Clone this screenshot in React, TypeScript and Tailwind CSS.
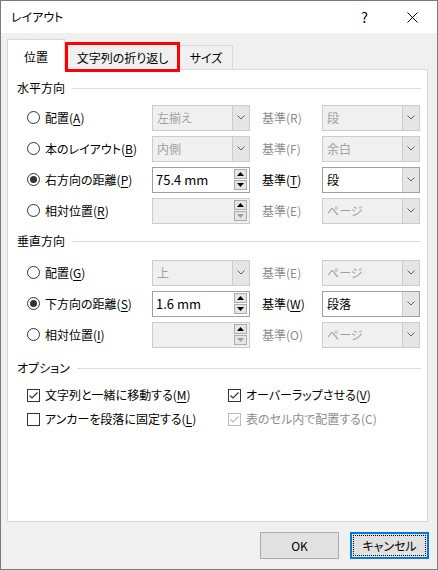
import React from 'react';

type Opt = { text: string; k?: string; disabled?: boolean };

// text with an access key in brackets, e.g. 配置(A)
function KeyLabel({ text, k, disabled }: Opt) {
  return (
    <span className={disabled ? 'text-[#8c8c8c]' : 'text-black'}>
      {text}(
      {disabled ? k : <span className="underline underline-offset-2">{k}</span>})
    </span>
  );
}

function Radio({ checked }: { checked?: boolean }) {
  return (
    <span className="flex h-[13px] w-[13px] shrink-0 items-center justify-center rounded-full border border-[#333333] bg-white">
      {checked && <span className="h-[7px] w-[7px] rounded-full bg-[#333333]" />}
    </span>
  );
}

function Check({ checked, disabled }: { checked?: boolean; disabled?: boolean }) {
  const c = disabled ? '#bcbcbc' : '#333333';
  return (
    <span
      className={`flex h-[13px] w-[13px] shrink-0 items-center justify-center border bg-white ${
        disabled ? 'border-[#bcbcbc]' : 'border-[#333333]'
      }`}
    >
      {checked && (
        <svg width="11" height="11" viewBox="0 0 11 11">
          <polyline points="1.5,5.5 4,8 9.5,2.5" fill="none" stroke={c} strokeWidth="1.2" />
        </svg>
      )}
    </span>
  );
}

function Chevron() {
  return (
    <svg width="8" height="5" viewBox="0 0 8 5">
      <polyline points="0.5,0.5 4,4 7.5,0.5" fill="none" stroke="#606060" strokeWidth="1" />
    </svg>
  );
}

function Combo({ value, disabled }: { value: string; disabled?: boolean }) {
  return (
    <div
      className={`flex h-[26px] w-[98px] shrink-0 items-stretch border ${
        disabled ? 'border-[#cccccc] bg-[#f0f0f0] text-[#a0a0a0]' : 'border-[#a0a0a0] bg-white text-black'
      }`}
    >
      <span className="flex flex-1 items-center pl-[4px]">{value}</span>
      <span className="flex w-[17px] items-center justify-center border-l border-[#cccccc] bg-[#e5e5e5]">
        <Chevron />
      </span>
    </div>
  );
}

function SpinBtn({ up, color }: { up?: boolean; color: string }) {
  return (
    <span className="flex h-[10px] w-[13px] items-center justify-center border border-[#adadad] bg-[#e5e5e5]">
      <svg width="7" height="4" viewBox="0 0 7 4">
        <polygon points={up ? '0,4 3.5,0 7,4' : '0,0 3.5,4 7,0'} fill={color} />
      </svg>
    </span>
  );
}

function Spin({ value, disabled }: { value?: string; disabled?: boolean }) {
  return (
    <div
      className={`flex h-[26px] w-[98px] shrink-0 items-center border pl-[3px] pr-[2px] ${
        disabled ? 'border-[#cccccc] bg-[#f0f0f0]' : 'border-[#a0a0a0] bg-white'
      }`}
    >
      <span className="flex-1 text-[13px] text-black">{value}</span>
      <div className="flex flex-col gap-[1px]">
        <SpinBtn up color="#000000" />
        <SpinBtn color={disabled ? '#a0a0a0' : '#000000'} />
      </div>
    </div>
  );
}

function SectionHead({ title }: { title: string }) {
  return (
    <div className="flex h-[20px] items-center pl-[9px]">
      <span className="text-black">{title}</span>
      <span className="ml-[7px] mr-[6px] flex-1 border-t border-[#dcdcdc]" />
    </div>
  );
}

type Row = {
  checked?: boolean;
  label: Opt;
  spin?: boolean;
  value?: string;
  enabled?: boolean;
  base: Opt;
  baseValue: string;
};

function PosRow({ r }: { r: Row }) {
  return (
    <div className="flex h-[31px] items-center pl-[19px]">
      <div className="flex w-[125px] items-center gap-[5px]">
        <Radio checked={r.checked} />
        <KeyLabel {...r.label} />
      </div>
      {r.spin ? <Spin value={r.value} disabled={!r.enabled} /> : <Combo value={r.value ?? ''} disabled={!r.enabled} />}
      <div className="w-[72px] pl-[12px]">
        <KeyLabel {...r.base} />
      </div>
      <Combo value={r.baseValue} disabled={!r.enabled} />
    </div>
  );
}

const horizontal: Row[] = [
  { label: { text: '配置', k: 'A' }, value: '左揃え', base: { text: '基準', k: 'R', disabled: true }, baseValue: '段' },
  { label: { text: '本のレイアウト', k: 'B' }, value: '内側', base: { text: '基準', k: 'F', disabled: true }, baseValue: '余白' },
  { checked: true, label: { text: '右方向の距離', k: 'P' }, spin: true, value: '75.4 mm', enabled: true, base: { text: '基準', k: 'T' }, baseValue: '段' },
  { label: { text: '相対位置', k: 'R' }, spin: true, base: { text: '基準', k: 'E', disabled: true }, baseValue: 'ページ' },
];

const vertical: Row[] = [
  { label: { text: '配置', k: 'G' }, value: '上', base: { text: '基準', k: 'E', disabled: true }, baseValue: 'ページ' },
  { checked: true, label: { text: '下方向の距離', k: 'S' }, spin: true, value: '1.6 mm', enabled: true, base: { text: '基準', k: 'W' }, baseValue: '段落' },
  { label: { text: '相対位置', k: 'I' }, spin: true, base: { text: '基準', k: 'O', disabled: true }, baseValue: 'ページ' },
];

function CheckItem({ checked, disabled, label, className }: { checked?: boolean; disabled?: boolean; label: Opt; className?: string }) {
  return (
    <div className={`flex items-center gap-[5px] ${className ?? ''}`}>
      <Check checked={checked} disabled={disabled} />
      <KeyLabel {...label} disabled={disabled} />
    </div>
  );
}

export default function App() {
  return (
    <div className="h-[570px] w-[438px] overflow-hidden border border-[#7a7a7a] bg-[#f0f0f0] font-['Noto_Sans_CJK_JP','Noto_Sans',sans-serif] text-[12px] leading-[16px] text-black [font-feature-settings:'palt']">
      {/* Title bar */}
      <div className="flex h-[32px] items-center bg-white pl-[10px]">
        <span className="flex-1 text-[12px]">レイアウト</span>
        <span className="mr-[39px] text-[14px]">?</span>
        <svg className="mr-[19px]" width="11" height="11" viewBox="0 0 11 11">
          <path d="M0.5 0.5 L10.5 10.5 M10.5 0.5 L0.5 10.5" stroke="#000" strokeWidth="1" />
        </svg>
      </div>

      {/* Tabs */}
      <div className="ml-[6px] mt-[6px] flex h-[30px] items-end">
        <div className="relative z-10 -mb-px flex h-[31px] w-[58px] justify-center border-x border-t border-[#d9d9d9] bg-white pt-[9px]">
          位置
        </div>
        <div className="relative z-20 -mb-[3px] flex h-[30px] w-[115px] justify-center border-[3px] border-[#ff0000] bg-[#f0f0f0] pt-[5px]">
          文字列の折り返し
        </div>
        <div className="flex h-[24px] w-[53px] justify-center border-r border-t border-[#d9d9d9] bg-[#f0f0f0] pt-[4px]">
          サイズ
        </div>
      </div>

      {/* Panel */}
      <div className="ml-[6px] flex h-[453px] w-[421px] flex-col border border-[#d9d9d9] bg-white pt-[8px]">
        <SectionHead title="水平方向" />
        <div className="mt-[4px]">
          {horizontal.map((r, i) => (
            <PosRow key={i} r={r} />
          ))}
        </div>

        <div className="mt-[5px]">
          <SectionHead title="垂直方向" />
        </div>
        <div className="mt-[6px]">
          {vertical.map((r, i) => (
            <PosRow key={i} r={r} />
          ))}
        </div>

        <div className="mt-[8px]">
          <SectionHead title="オプション" />
        </div>
        <div className="mt-[5px] pl-[19px]">
          <div className="flex h-[24px] items-center">
            <CheckItem className="w-[201px]" checked label={{ text: '文字列と一緒に移動する', k: 'M' }} />
            <CheckItem checked label={{ text: 'オーバーラップさせる', k: 'V' }} />
          </div>
          <div className="flex h-[24px] items-center">
            <CheckItem className="w-[201px]" label={{ text: 'アンカーを段落に固定する', k: 'L' }} />
            <CheckItem checked disabled label={{ text: '表のセル内で配置する', k: 'C' }} />
          </div>
        </div>
      </div>

      {/* Buttons */}
      <div className="mt-[10px] flex justify-end gap-[11px] pr-[8px]">
        <button className="flex h-[27px] w-[79px] items-center justify-center border border-[#adadad] bg-[#e1e1e1]">
          OK
        </button>
        <button className="flex h-[27px] w-[79px] items-stretch border-2 border-[#0078d7] bg-[#e1e1e1] p-[1px]">
          <span className="flex flex-1 items-center justify-center border border-dotted border-black">キャンセル</span>
        </button>
      </div>
    </div>
  );
}
